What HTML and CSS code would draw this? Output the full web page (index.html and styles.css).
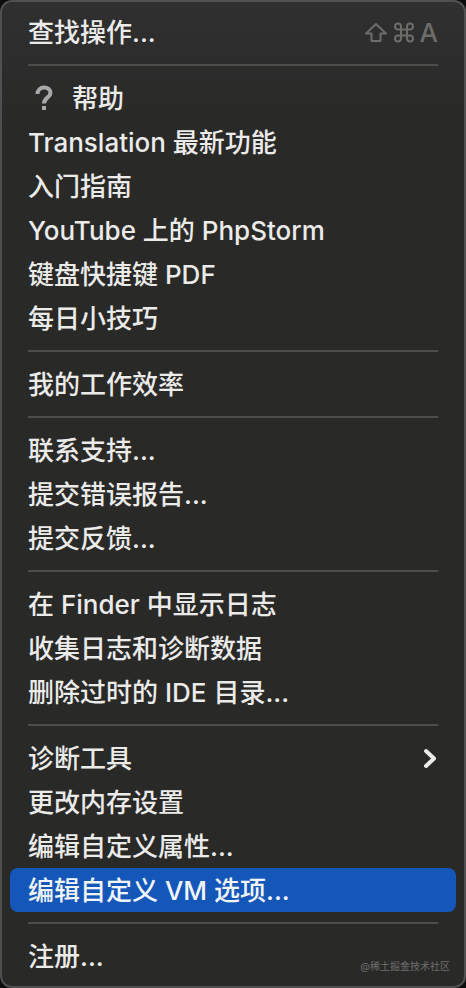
FILE: index.html
```
<!DOCTYPE html>
<html lang="zh-CN">
<head>
<meta charset="utf-8">
<meta name="viewport" content="width=device-width, initial-scale=1">
<title>帮助</title>
<link rel="stylesheet" href="styles.css">
</head>
<body>
<nav class="menu">
  <button class="item" type="button">查找操作...
    <span class="shortcut">
      <svg class="key-icon" viewBox="0 0 24 24" aria-hidden="true"><path d="M12 3 L22 12.5 H16.5 V20 H7.5 V12.5 H2 Z"/></svg>
      <svg class="key-icon" viewBox="0 0 24 24" aria-hidden="true"><path d="M9 8.5 H15 V14.5 H9 Z M9 8.5 H6 A3 3 0 1 1 9 5.5 Z M15 8.5 V5.5 A3 3 0 1 1 18 8.5 Z M15 14.5 H18 A3 3 0 1 1 15 17.5 Z M9 14.5 V17.5 A3 3 0 1 1 6 14.5 Z"/></svg>
      <span>A</span>
    </span>
  </button>
  <hr class="separator">
  <button class="item" type="button"><svg class="help-icon" viewBox="0 0 32 32" aria-hidden="true"><path d="M9.5 11 C9.5 2.5 22.5 2.5 22.5 10 C22.5 14.5 16 14.5 16 20.5"/><rect x="14" y="23" width="4" height="4"/></svg>帮助</button>
  <button class="item" type="button">Translation 最新功能</button>
  <button class="item" type="button">入门指南</button>
  <button class="item" type="button">YouTube 上的 PhpStorm</button>
  <button class="item" type="button">键盘快捷键 PDF</button>
  <button class="item" type="button">每日小技巧</button>
  <hr class="separator">
  <button class="item" type="button">我的工作效率</button>
  <hr class="separator">
  <button class="item" type="button">联系支持...</button>
  <button class="item" type="button">提交错误报告...</button>
  <button class="item" type="button">提交反馈...</button>
  <hr class="separator">
  <button class="item" type="button">在 Finder 中显示日志</button>
  <button class="item" type="button">收集日志和诊断数据</button>
  <button class="item" type="button">删除过时的 IDE 目录...</button>
  <hr class="separator">
  <button class="item" type="button">诊断工具
    <svg class="chevron" viewBox="0 0 14 22" aria-hidden="true"><path d="M2 3 L10 10.5 L2 18"/></svg>
  </button>
  <button class="item" type="button">更改内存设置</button>
  <button class="item" type="button">编辑自定义属性...</button>
  <button class="item selected" type="button">编辑自定义 VM 选项...</button>
  <hr class="separator">
  <button class="item" type="button">注册...</button>
  <small class="credit">@稀土掘金技术社区</small>
</nav>
</body>
</html>
```
FILE: styles.css
```
* {
  box-sizing: border-box;
}

body {
  margin: 0;
  background: #0c0c0c;
}

.menu {
  position: relative;
  padding: 8px;
  border: 2px solid #505050;
  border-radius: 12px;
  background: linear-gradient(#303030, #292928 120px);
  font-family: Inter, "Noto Sans CJK SC", sans-serif;
}

.item {
  display: flex;
  align-items: center;
  width: 100%;
  height: 44px;
  padding: 2px 18px 0;
  border: 0;
  border-radius: 8px;
  background: none;
  color: #ebebea;
  font: inherit;
  font-size: 26px;
  font-weight: 500;
  line-height: 42px;
  text-align: left;
  white-space: nowrap;
}

.selected {
  background: #1557b9;
  color: #f2f6fc;
}

.separator {
  height: 2px;
  margin: 10px 18px;
  border: 0;
  background: #4d4d4c;
}

.shortcut {
  display: flex;
  align-items: center;
  gap: 4px;
  margin-left: auto;
  color: #6c6c6b;
}

.key-icon {
  width: 24px;
  height: 24px;
  fill: none;
  stroke: currentColor;
  stroke-width: 2;
  stroke-linejoin: round;
}

.help-icon {
  width: 32px;
  height: 32px;
  margin-right: 12px;
  fill: #a9a9a9;
}

.help-icon path {
  fill: none;
  stroke: #a9a9a9;
  stroke-width: 4;
}

.chevron {
  width: 14px;
  height: 22px;
  margin-left: auto;
  fill: none;
  stroke: currentColor;
  stroke-width: 4;
  stroke-linecap: round;
  stroke-linejoin: round;
}

.credit {
  position: absolute;
  right: 14px;
  bottom: 12px;
  color: #6f6f6e;
  font-size: 10px;
  line-height: 16px;
}
```
